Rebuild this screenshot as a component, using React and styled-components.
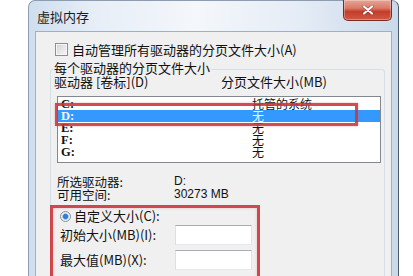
import styled, { createGlobalStyle } from 'styled-components';

const GlobalStyle = createGlobalStyle`
  html, body {
    margin: 0;
    padding: 0;
    background: #fff;
  }
  body {
    font-family: "Noto Sans CJK SC", "Noto Sans", sans-serif;
    color: #111;
  }
`;

const Stage = styled.div`
  width: 413px;
  height: 276px;
  overflow: hidden;
  background: #fff;
`;

const Window = styled.div`
  box-sizing: border-box;
  margin-left: 28px;
  width: 371px;
  height: 300px;
  padding: 0 6px;
  border: 1px solid #8c9db1;
  border-right-color: #4d5a6b;
  border-bottom: none;
  border-radius: 7px 7px 0 0;
  background: linear-gradient(to right, #cfdeee 0%, #e7eef7 18%, #f4f7fb 45%, #e6edf6 72%, #cad9ea 100%);
`;

const TitleBar = styled.div`
  display: flex;
  justify-content: space-between;
  align-items: flex-start;
  height: 30px;
`;

const Title = styled.div`
  padding: 9px 0 0 2px;
  font-size: 13px;
  line-height: 13px;
  color: #1b1b1b;
`;

const CloseButton = styled.div`
  box-sizing: border-box;
  width: 49px;
  height: 21px;
  margin-top: -1px;
  border: 1px solid #7a2c22;
  border-top: none;
  border-radius: 0 0 5px 5px;
  background: linear-gradient(#e6a596 0%, #db7b69 40%, #c43d2a 58%, #cf5a42 100%);
  box-shadow: inset 0 0 0 1px rgba(255, 255, 255, 0.3);
  display: flex;
  align-items: center;
  justify-content: center;
`;

const Client = styled.div`
  box-sizing: border-box;
  height: 270px;
  border: 1px solid #9eb0c6;
  border-bottom: none;
  background: #f0f0f0;
`;

const CheckRow = styled.div`
  display: flex;
  align-items: center;
  padding: 11px 0 0 19px;
  font-size: 13px;
  line-height: 13px;
`;

const CheckBox = styled.span`
  box-sizing: border-box;
  width: 13px;
  height: 13px;
  margin-right: 4px;
  border: 1px solid #8e8f8f;
  background: linear-gradient(135deg, #d2d2d2, #f8f8f8);
  box-shadow: inset 0 0 0 1px #f6f6f6;
`;

const Group = styled.div`
  box-sizing: border-box;
  margin: 13px 6px 0 14px;
  height: 220px;
  border: 1px solid #d5dfe5;
  border-bottom: none;
  border-radius: 3px 3px 0 0;
`;

const Legend = styled.div`
  width: fit-content;
  margin: -9px 0 0 2px;
  padding: 0 1px;
  background: #f0f0f0;
  font-size: 13px;
  line-height: 13px;
`;

const HeaderRow = styled.div`
  display: grid;
  grid-template-columns: 167px auto;
  margin-top: 1px;
  padding-left: 3px;
  font-size: 13px;
  line-height: 13px;
`;

const ListBox = styled.div`
  position: relative;
  box-sizing: border-box;
  width: 324px;
  height: 67px;
  margin: 8px 0 0 6px;
  padding-top: 1px;
  border: 1px solid #828790;
  background: #fff;
`;

const ListRow = styled.div`
  display: grid;
  grid-template-columns: 191px 1fr;
  height: 12px;
  padding-left: 3px;
  line-height: 12px;
  background: ${p => (p.$selected ? '#3399ff' : 'transparent')};
  color: ${p => (p.$selected ? '#eef6ff' : '#111')};
`;

const Drive = styled.span`
  font-family: "Liberation Serif", serif;
  font-weight: 700;
  font-size: 12.5px;
`;

const Size = styled.span`
  font-size: 12px;
`;

const Highlight = styled.div`
  position: absolute;
  left: -3px;
  top: 6px;
  box-sizing: border-box;
  width: 303px;
  height: 23px;
  border: 3px solid rgba(204, 52, 58, 0.88);
  box-shadow: 0 0 2px rgba(220, 90, 90, 0.5);
  pointer-events: none;
`;

const Info = styled.div`
  margin-top: 12px;
  padding-left: 6px;
`;

const InfoRow = styled.div`
  display: grid;
  grid-template-columns: 117px auto;
  height: 13px;
  font-size: 12.5px;
  line-height: 13px;
`;

const Value = styled.span`
  font-family: "Liberation Sans", "Noto Sans CJK SC", sans-serif;
  font-size: 12px;
`;

const CustomBox = styled.div`
  box-sizing: border-box;
  width: 210px;
  margin: 4px 0 0 -1px;
  padding: 1px 4px 10px 7px;
  border: 3px solid rgba(204, 52, 58, 0.9);
  box-shadow: inset 0 0 3px rgba(230, 120, 120, 0.45);
`;

const RadioRow = styled.div`
  display: flex;
  align-items: center;
  height: 14px;
  font-size: 13px;
  line-height: 14px;
`;

const Radio = styled.span`
  box-sizing: border-box;
  width: 11px;
  height: 11px;
  margin-right: 3px;
  border-radius: 50%;
  border: 1px solid #8a8f96;
  background: radial-gradient(circle, #2f7fd8 0 2.2px, #8cc4f4 2.8px, #e9eef4 3.6px, #f6f6f6 100%);
`;

const FieldRow = styled.div`
  display: grid;
  grid-template-columns: 115px 77px;
  align-items: center;
  margin-top: ${p => p.$gap}px;
  font-size: 13px;
  line-height: 14px;
`;

const TextInput = styled.input`
  box-sizing: border-box;
  width: 77px;
  height: 20px;
  margin: 0;
  padding: 0;
  border: 1px solid;
  border-color: #abadb3 #e2e3ea #e3e9ef #dbdfe6;
  background: #fff;
  outline: none;
`;

const drives = [
  { letter: 'C:', size: '托管的系统' },
  { letter: 'D:', size: '无', selected: true },
  { letter: 'E:', size: '无' },
  { letter: 'F:', size: '无' },
  { letter: 'G:', size: '无' },
];

export default function App() {
  return (
    <>
      <GlobalStyle />
      <Stage>
        <Window>
          <TitleBar>
            <Title>虚拟内存</Title>
            <CloseButton>
              <svg width="12" height="10" viewBox="0 0 12 10">
                <path d="M2 1.5 L10 8.5 M10 1.5 L2 8.5" stroke="#5a1a12" strokeWidth="3.4" strokeLinecap="round" opacity="0.45" />
                <path d="M2 1.5 L10 8.5 M10 1.5 L2 8.5" stroke="#fff" strokeWidth="2.2" strokeLinecap="round" />
              </svg>
            </CloseButton>
          </TitleBar>
          <Client>
            <CheckRow>
              <CheckBox />
              自动管理所有驱动器的分页文件大小(A)
            </CheckRow>
            <Group>
              <Legend>每个驱动器的分页文件大小</Legend>
              <HeaderRow>
                <span>驱动器 [卷标](D)</span>
                <span>分页文件大小(MB)</span>
              </HeaderRow>
              <ListBox>
                {drives.map(d => (
                  <ListRow key={d.letter} $selected={d.selected}>
                    <Drive>{d.letter}</Drive>
                    <Size>{d.size}</Size>
                  </ListRow>
                ))}
                <Highlight />
              </ListBox>
              <Info>
                <InfoRow>
                  <span>所选驱动器:</span>
                  <Value>D:</Value>
                </InfoRow>
                <InfoRow>
                  <span>可用空间:</span>
                  <Value>30273 MB</Value>
                </InfoRow>
              </Info>
              <CustomBox>
                <RadioRow>
                  <Radio />
                  自定义大小(C):
                </RadioRow>
                <FieldRow $gap={2}>
                  <span>初始大小(MB)(I):</span>
                  <TextInput readOnly />
                </FieldRow>
                <FieldRow $gap={5}>
                  <span>最大值(MB)(X):</span>
                  <TextInput readOnly />
                </FieldRow>
              </CustomBox>
            </Group>
          </Client>
        </Window>
      </Stage>
    </>
  );
}
